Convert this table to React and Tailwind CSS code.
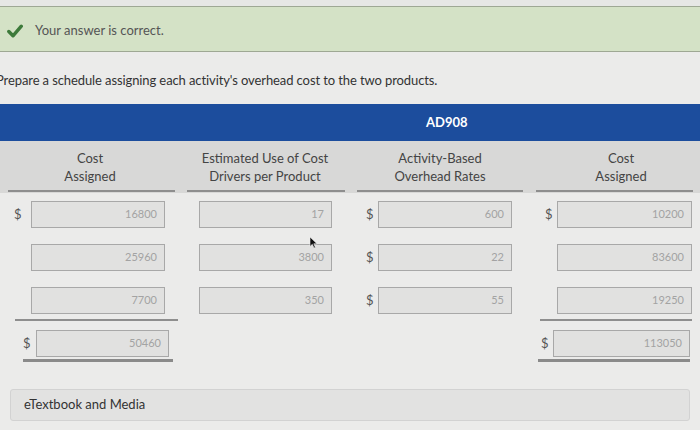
import React from "react";

const COLS = "grid grid-cols-[180px_170px_180px_170px]";

function Cell({ pl, dollar, dw, w, value }) {
  return (
    <div className="flex items-center" style={{ paddingLeft: pl }}>
      {dw ? (
        <span className="text-[13px] text-[#555]" style={{ width: dw }}>
          {dollar ? "$" : ""}
        </span>
      ) : null}
      <div
        className="h-[27px] bg-[#e1e1e0] border border-[#a8a8a8] flex items-center justify-end pr-[7px] text-[11px] text-[#a3a3a3]"
        style={{ width: w }}
      >
        {value}
      </div>
    </div>
  );
}

export default function App() {
  const rows = [
    ["16800", "17", "600", "10200", [true, true, true]],
    ["25960", "3800", "22", "83600", [false, true, false]],
    ["7700", "350", "55", "19250", [false, true, false]],
  ];
  return (
    <div
      className="relative w-[700px] h-[430px] overflow-hidden bg-[#ebebea] text-[#333]"
      style={{ fontFamily: "Lato, 'Open Sans', sans-serif" }}
    >
      <div className="h-[6px] bg-[#e6e7e5]" />
      <div className="h-[46px] bg-[#d4e2c6] border-y border-[#9ea894] flex items-center pt-[4px]">
        <svg width="16" height="14" viewBox="0 0 16 14" className="ml-[7px]">
          <path d="M1.8 7.5 L6 11.8 L14.3 2.2" fill="none" stroke="#3d7a3a" strokeWidth="3.4" strokeLinecap="round" strokeLinejoin="round" />
        </svg>
        <span className="ml-[12px] text-[13px] text-[#555]">Your answer is correct.</span>
      </div>
      <div className="mt-[19px] ml-[-4px] text-[13px] text-[#333] leading-[18px] tracking-[-0.1px] whitespace-nowrap">
        Prepare a schedule assigning each activity's overhead cost to the two products.
      </div>
      <div className="mt-[15px] h-[37px] bg-[#1c4d9d] flex items-center">
        <div className="w-[426px]" />
        <span className="text-white font-bold text-[13px]">AD908</span>
      </div>
      <div className={`${COLS} bg-[#d8d8d7] h-[52px]`}>
        {[
          ["Cost", "Assigned", "ml-[8px] mr-[5px]", ""],
          ["Estimated Use of Cost", "Drivers per Product", "ml-[7px] mr-[5px]", ""],
          ["Activity-Based", "Overhead Rates", "ml-[7px] mr-[7px]", ""],
          ["Cost", "Assigned", "ml-[6px] mr-[7px]", "pl-[12px]"],
        ].map(([a, b, m, p], i) => (
          <div key={i} className="flex flex-col">
            <div className={`flex-1 flex flex-col items-center justify-center text-[13px] leading-[18px] text-[#444] pt-[2px] ${p}`}>
              <span>{a}</span>
              <span>{b}</span>
            </div>
            <div className={`h-[2px] bg-[#8e8e8e] mb-[1px] ${m}`} />
          </div>
        ))}
      </div>
      <div className="flex flex-col gap-[16px] pt-[8px]">
        {rows.map((r, i) => (
          <div key={i} className={COLS}>
            <Cell pl={14} dw={17} dollar={r[4][0]} w={134} value={r[0]} />
            <Cell pl={19} w={133} value={r[1]} />
            <Cell pl={16} dw={12} dollar={r[4][1]} w={134} value={r[2]} />
            <Cell pl={15} dw={12} dollar={r[4][2]} w={135} value={r[3]} />
          </div>
        ))}
      </div>
      <div className={`${COLS} mt-[5px]`}>
        <div className="h-[2px] bg-[#8e8e8e] ml-[15px] mr-[2px]" />
        <div />
        <div />
        <div className="h-[2px] bg-[#8e8e8e] ml-[10px] mr-[8px]" />
      </div>
      <div className={`${COLS} mt-[9px]`}>
        <div className="flex flex-col">
          <Cell pl={23} dw={13} dollar w={133} value="50460" />
          <div className="h-[3px] bg-[#8a8a8a] mt-[2px] ml-[23px] mr-[7px]" />
        </div>
        <div />
        <div />
        <div className="flex flex-col">
          <Cell pl={11} dw={12} dollar w={137} value="113050" />
          <div className="h-[3px] bg-[#8a8a8a] mt-[2px] ml-[8px] mr-[10px]" />
        </div>
      </div>
      <div className="mt-[27px] mx-[10px] h-[32px] bg-[#e2e2e1] border border-[#d2d2d2] rounded-[3px] flex items-center pl-[13px] text-[13px] text-[#333]">
        eTextbook and Media
      </div>
      <svg className="absolute left-[309px] top-[236px]" width="9" height="13" viewBox="0 0 9 13">
        <path d="M1 1 L1 10.5 L3.3 8.3 L5 12 L6.4 11.4 L4.8 7.8 L8 7.8 Z" fill="#111" stroke="#eee" strokeWidth="0.6" />
      </svg>
    </div>
  );
}
